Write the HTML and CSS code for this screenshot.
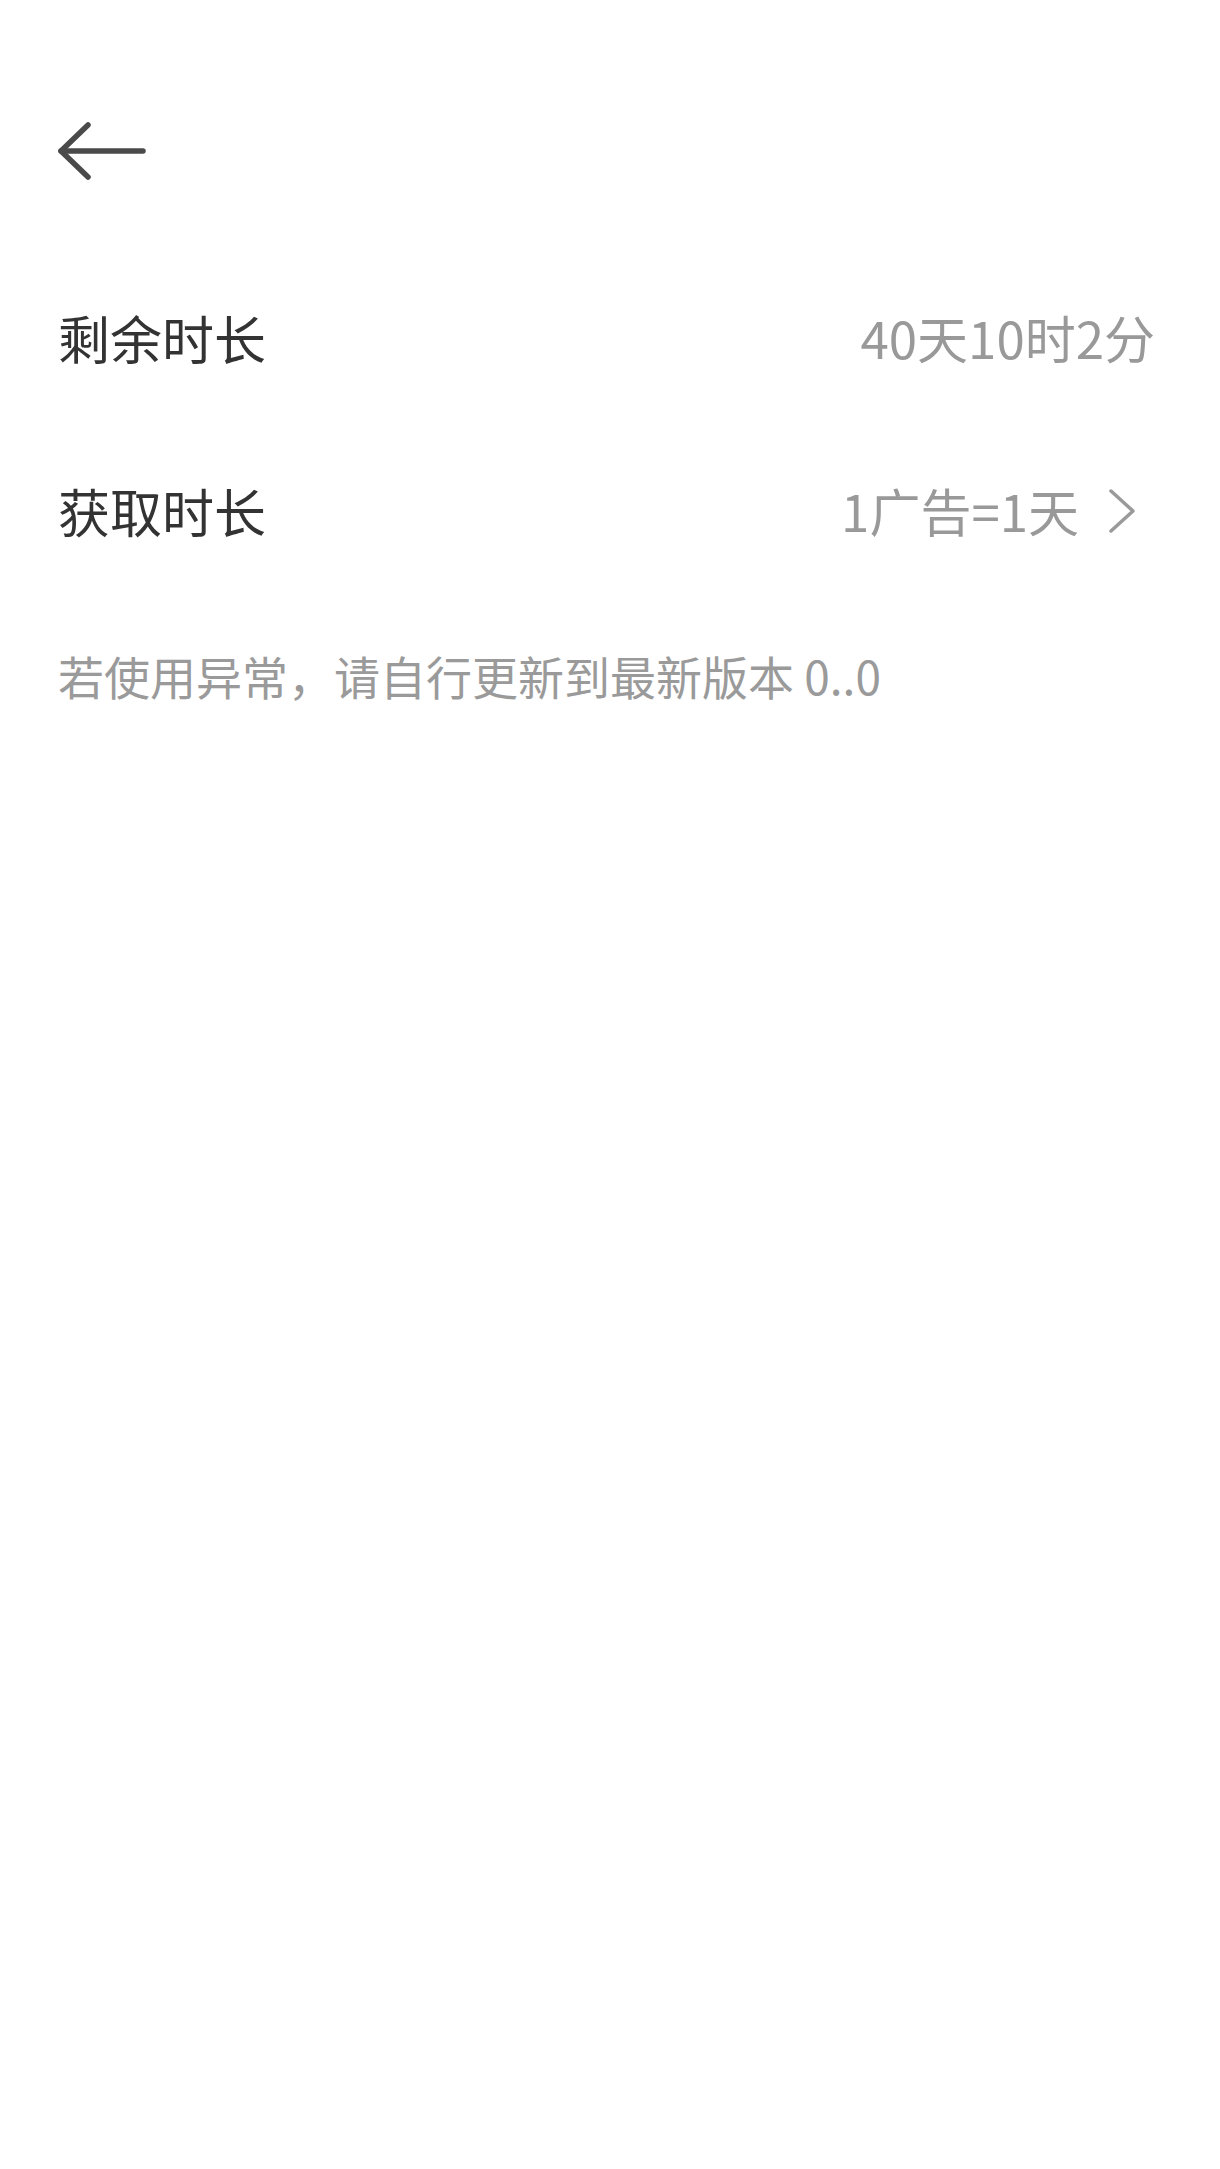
FILE: index.html
```html
<!DOCTYPE html>
<html lang="zh-CN">
<head>
<meta charset="utf-8">
<title>剩余时长</title>
<link rel="stylesheet" href="styles.css">
</head>
<body>
<div class="page">
  <header class="header">
    <svg class="back" width="90" height="62" viewBox="0 0 90 62" aria-label="返回">
      <polyline points="30,4 3,30 30,56" />
      <line x1="3" y1="30" x2="85" y2="30" />
    </svg>
  </header>
  <div class="row">
    <span class="label">剩余时长</span>
    <span class="value">40天10时2分</span>
  </div>
  <div class="row">
    <span class="label">获取时长</span>
    <span class="value-wrap">
      <span class="value">1广告=1天</span>
      <svg class="chevron" width="26" height="44" viewBox="0 0 26 44">
        <polyline points="2,2 24,22 2,42" />
      </svg>
    </span>
  </div>
  <p class="note">若使用异常，请自行更新到最新版本 0..0</p>
</div>
</body>
</html>
```
FILE: styles.css
```css
html, body {
  margin: 0;
  padding: 0;
  background: #ffffff;
}
body {
  font-family: "Noto Sans CJK SC", "Noto Sans", sans-serif;
}
.page {
  padding: 0 65px 0 58px;
}
.header {
  padding-top: 121px;
  height: 62px;
  margin-bottom: 68px;
}
.back {
  display: block;
  margin-left: 0;
  fill: none;
  stroke: #4a4a4a;
  stroke-width: 5.5;
  stroke-linecap: round;
  stroke-linejoin: round;
}
.row {
  display: flex;
  align-items: center;
  justify-content: space-between;
  height: 173px;
}
.label {
  font-size: 52px;
  color: #333333;
  line-height: 1;
}
.value {
  font-size: 51px;
  color: #999999;
  line-height: 1;
}
.value-wrap {
  display: flex;
  align-items: center;
}
.chevron {
  display: block;
  margin-left: 30px;
  margin-right: 20px;
  fill: none;
  stroke: #9a9a9a;
  stroke-width: 3.5;
  stroke-linecap: round;
  stroke-linejoin: round;
}
.note {
  margin: 48px 0 0;
  font-size: 46px;
  line-height: 60px;
  color: #9a9a9a;
}
```
